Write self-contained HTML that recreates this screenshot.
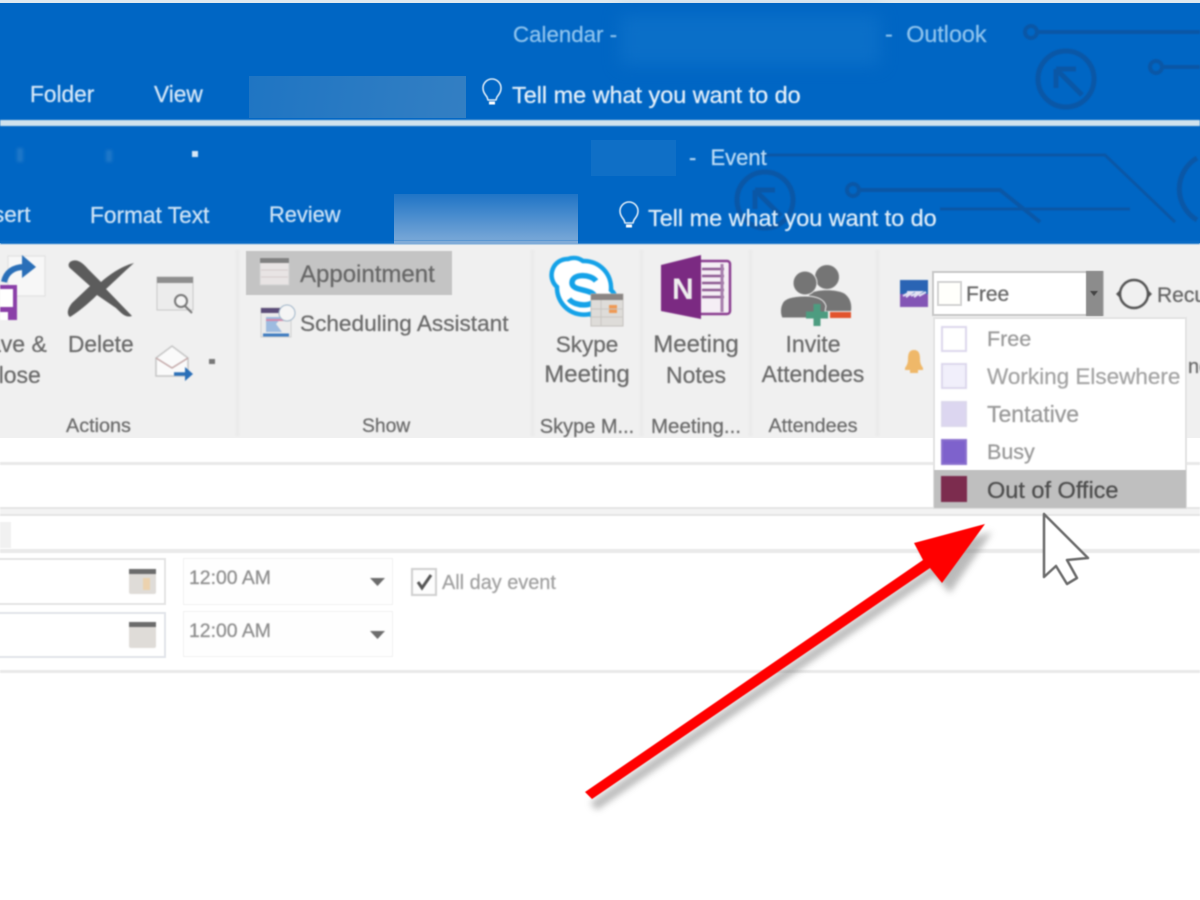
<!DOCTYPE html>
<html>
<head>
<meta charset="utf-8">
<style>
html,body{margin:0;padding:0;background:#fff}
#p{position:relative;width:1200px;height:900px;overflow:hidden;background:#fff;font-family:"Liberation Sans",sans-serif}
.a{position:absolute}
.t{position:absolute;white-space:nowrap;line-height:1;filter:blur(.8px);-webkit-text-stroke:.25px currentColor}
.w{color:#d6e8f8}
.g{color:#6a6a6a}
.c{transform:translateX(-50%)}
.s{position:absolute;width:26px;height:26px;box-sizing:border-box;border:2px solid #dcd8ec;left:941px;filter:blur(.7px)}
.line{position:absolute;left:0;width:1200px;background:#e9e9e9;filter:blur(.5px)}
.sep{position:absolute;top:250px;width:3px;height:186px;background:#e9e9e9;filter:blur(1px)}
</style>
</head>
<body>
<div id="p">
<div class="a" style="left:0;top:3px;width:1200px;height:240px;background:#0066c4"></div>
<div class="a" style="left:0;top:0;width:1200px;height:3px;background:#dfe9f0"></div>
<div class="a" style="left:0;top:120px;width:1200px;height:6px;background:#cfe2ee;filter:blur(.8px)"></div>
<div class="a" style="left:620px;top:15px;width:260px;height:50px;background:#0a6fc8;filter:blur(8px)"></div>
<div class="a" style="left:249px;top:76px;width:217px;height:42px;background:linear-gradient(100deg,#1f75c3,#337fc3)"></div>
<div class="a" style="left:591px;top:140px;width:85px;height:36px;background:#0f6fc6"></div>
<div class="a" style="left:394px;top:194px;width:184px;height:50px;background:linear-gradient(#1f74c6,#7fabd8)"></div>

<svg class="a" style="left:0;top:0;filter:blur(.9px)" width="1200" height="245" fill="none" stroke="#0a57a6" stroke-width="4">
<circle cx="1031" cy="32" r="6"/><path d="M1037 32H1200"/>
<circle cx="1156" cy="67" r="6"/><path d="M1162 67H1200"/>
<circle cx="1066" cy="79" r="28" stroke-width="5"/><path d="M1056 69V88M1056 69H1076M1056 69L1082 95" stroke-width="5"/>
<path d="M760 155H1105L1175 222" stroke-width="3"/>
<path d="M1197 158a36 36 0 0 0 0 62" stroke-width="5"/>
<circle cx="853" cy="190" r="6"/><path d="M859 190H1000L1040 222"/>
<path d="M940 209H1130" stroke-width="3"/>
<circle cx="765" cy="200" r="28" stroke-width="5"/><path d="M755 190V209M755 190H775M755 190L781 216" stroke-width="5"/>
</svg>

<div class="t" style="left:513px;top:24px;font-size:22.300px;color:#8fc4ee">Calendar -</div>
<div class="t" style="left:885px;top:23px;font-size:23.300px;color:#8fc4ee">- <span style="margin-left:7px">Outlook</span></div>
<div class="t w" style="left:30px;top:83px;font-size:22.700px">Folder</div>
<div class="t w" style="left:154px;top:83px;font-size:22.700px">View</div>
<div class="t" style="left:512px;top:84px;font-size:23.400px;color:#e6f1fa">Tell me what you want to do</div>
<svg class="a" style="left:481px;top:78px;filter:blur(.6px)" width="22" height="30" fill="none" stroke="#dcebf7" stroke-width="1.6"><path d="M6 19C3 15 2 13 2 10a9 9 0 0 1 18 0c0 3-1 5-4 9l-1 3H7z"/><path d="M8 25h6" stroke-width="3" stroke="#fff"/></svg>

<div class="a" style="left:192px;top:151px;width:6px;height:6px;background:#d8e8f6;filter:blur(.8px)"></div>
<div class="a" style="left:17px;top:148px;width:6px;height:14px;background:#1f78c8;filter:blur(1.5px)"></div>
<div class="a" style="left:106px;top:150px;width:6px;height:12px;background:#1f78c8;filter:blur(1.5px)"></div>
<div class="t" style="left:689px;top:147px;font-size:22px;color:#bcdcf5">- <span style="margin-left:8px">Event</span></div>
<div class="t" style="left:-7px;top:204px;font-size:22.500px;color:#cfe4f6">sert</div>
<div class="t" style="left:90px;top:204px;font-size:22.700px;color:#cfe4f6">Format Text</div>
<div class="t" style="left:269px;top:204px;font-size:21.800px;color:#cfe4f6">Review</div>
<div class="t" style="left:648px;top:207px;font-size:23.400px;color:#e0eef9">Tell me what you want to do</div>
<svg class="a" style="left:618px;top:201px;filter:blur(.6px)" width="22" height="30" fill="none" stroke="#dcebf7" stroke-width="1.6"><path d="M6 19C3 15 2 13 2 10a9 9 0 0 1 18 0c0 3-1 5-4 9l-1 3H7z"/><path d="M8 25h6" stroke-width="3" stroke="#fff"/></svg>

<div class="a" style="left:0;top:243px;width:1200px;height:195px;background:#f0f0f0"></div>
<div class="a" style="left:0;top:241px;width:1200px;height:3px;background:#0a6cc4;filter:blur(.7px)"></div>
<div class="a" style="left:394px;top:241px;width:184px;height:3px;background:#7fabd8"></div>
<div class="sep" style="left:236px"></div><div class="sep" style="left:531px"></div><div class="sep" style="left:640px"></div><div class="sep" style="left:749px"></div><div class="sep" style="left:876px"></div>

<svg class="a" style="left:0;top:250px;filter:blur(.8px)" width="60" height="75">
<rect x="8" y="6" width="37" height="40" fill="#f7f7f7" stroke="#dedede"/>
<path d="M4 32C6 22 14 17 24 17" fill="none" stroke="#2a6fb8" stroke-width="6"/><path d="M22 5L36 17L22 28z" fill="#2a6fb8"/>
<path d="M-3 35H17V70H-3z" fill="#8a3fa8"/><path d="M-3 39H13V57H-3z" fill="#fff"/><path d="M-3 62H8V70H-3z" fill="#fff"/>
</svg>
<svg class="a" style="left:64px;top:256px;filter:blur(.9px)" width="76" height="66"><path d="M6 6C12 2 18 6 24 13L37 26C46 18 58 10 70 7C62 14 52 24 42 33L68 60C62 62 58 58 52 52L33 39C24 48 14 56 6 61C2 58 4 52 8 47L26 30L7 13C4 11 4 8 6 6Z" fill="#5c5c5c"/></svg>
<svg class="a" style="left:154px;top:274px;filter:blur(.8px)" width="44" height="42"><rect x="3" y="3" width="36" height="33" fill="#ececec" stroke="#c8c8c8"/><rect x="3" y="3" width="36" height="6" fill="#8e8e8e"/><circle cx="27" cy="27" r="6" fill="#f4f4f4" stroke="#777" stroke-width="2"/><path d="M31 32L38 39" stroke="#777" stroke-width="2"/></svg>
<svg class="a" style="left:154px;top:344px;filter:blur(.8px)" width="44" height="40"><path d="M2 14L18 2L34 14V32H2z" fill="#fafafa" stroke="#c5c5c5" stroke-width="1.500"/><path d="M2 14L18 24L34 14" fill="none" stroke="#c4a9a9" stroke-width="1.500"/><path d="M20 30H34" stroke="#2a6fb8" stroke-width="3.500"/><path d="M31 23L39 30L31 37z" fill="#2a6fb8"/></svg>
<div class="a" style="left:209px;top:359px;width:6px;height:5px;background:#777;filter:blur(.8px)"></div>

<div class="t g" style="left:-12px;top:333px;font-size:23px">ave &amp;</div>
<div class="t g" style="left:-18px;top:364px;font-size:23px">Close</div>
<div class="t g" style="left:68px;top:333px;font-size:22.700px">Delete</div>
<div class="t g" style="left:66px;top:417px;font-size:19.800px">Actions</div>
<div class="t g" style="left:362px;top:417px;font-size:19.300px">Show</div>

<div class="a" style="left:246px;top:251px;width:206px;height:44px;background:#c4c4c4;filter:blur(.5px)"></div>
<svg class="a" style="left:258px;top:256px;filter:blur(.8px)" width="34" height="32"><rect x="2" y="2" width="29" height="27" fill="#e8e4e4" stroke="#d0d0d0"/><rect x="2" y="2" width="29" height="5" fill="#808080"/><path d="M3 14H30M3 21H30" stroke="#d4cccc"/></svg>
<div class="t" style="left:300px;top:263px;font-size:24px;color:#666">Appointment</div>
<svg class="a" style="left:258px;top:302px;filter:blur(.8px)" width="40" height="38"><rect x="3" y="6" width="30" height="29" fill="#ececec" stroke="#cfcfcf"/><rect x="3" y="6" width="22" height="5" fill="#5b4c78"/><path d="M8 15H24L18 22L24 30H8" fill="#9dbbe0"/><path d="M5 33H31" stroke="#3f7cc0" stroke-width="3"/><path d="M8 18H28" stroke="#d487a8" stroke-width="2"/><circle cx="29" cy="11" r="8" fill="#f5f5f5" stroke="#9fb4c8"/></svg>
<div class="t g" style="left:300px;top:313px;font-size:22.600px">Scheduling Assistant</div>

<svg class="a" style="left:549px;top:254px;filter:blur(.8px)" width="80" height="76" fill="none">
<path d="M19 5a16 16 0 0 1 15 2a27 27 0 0 1 28 29a15 15 0 0 1-21 24a27 27 0 0 1-33-27a16 16 0 0 1 11-28z" fill="#fff" stroke="#15a2e8" stroke-width="4.500"/>
<path d="M47 27C42 20 23 19 23 29C23 38 46 34 46 44C46 53 26 53 20 45" stroke="#15a2e8" stroke-width="5.500"/>
<rect x="42" y="40" width="32" height="32" fill="#dedcd9" stroke="#c3c0bc"/><rect x="42" y="40" width="32" height="6" fill="#8a8583"/><rect x="60" y="51" width="8" height="8" fill="#ef9a55"/><path d="M42 55H74M42 63H74M52 46V72" stroke="#c9c6c2"/>
</svg>
<svg class="a" style="left:658px;top:252px;filter:blur(.8px)" width="76" height="72">
<rect x="38" y="9" width="34" height="53" rx="3" fill="#f5eef5" stroke="#8a3d8f" stroke-width="2.500"/>
<path d="M44 17H66M44 24H66M44 31H66M44 38H66M44 45H66" stroke="#8d5a92" stroke-width="2.500"/>
<path d="M64 12V60" stroke="#a67dac" stroke-width="3"/>
<path d="M3 13L43 3V67L3 59Z" fill="#7b2a82"/>
<text x="14" y="47" font-family="Liberation Sans" font-weight="700" font-size="30" fill="#eee">N</text>
</svg>
<svg class="a" style="left:776px;top:258px;filter:blur(.9px)" width="80" height="72">
<circle cx="51" cy="19" r="12" fill="#757575"/><path d="M33 36C40 31 62 31 69 36C74 40 76 46 75 53H33Z" fill="#757575"/>
<circle cx="29" cy="25" r="12" fill="#757575" stroke="#f0f0f0" stroke-width="1"/><path d="M6 46C8 40 18 38 29 38C40 38 48 41 50 48L48 60H6C4 56 4 50 6 46Z" fill="#757575" stroke="#f0f0f0" stroke-width="1"/>
<path d="M30 57H52M41 46V68" stroke="#4d9c80" stroke-width="7"/><path d="M54 57H75" stroke="#e2532d" stroke-width="6"/>
</svg>

<div class="t g c" style="left:587px;top:334px;font-size:22.500px">Skype</div>
<div class="t g c" style="left:587px;top:363px;font-size:24px">Meeting</div>
<div class="t g c" style="left:696px;top:333px;font-size:24px">Meeting</div>
<div class="t g c" style="left:696px;top:364px;font-size:23px">Notes</div>
<div class="t g c" style="left:813px;top:333px;font-size:23px">Invite</div>
<div class="t g c" style="left:813px;top:363px;font-size:22.800px">Attendees</div>
<div class="t g c" style="left:587px;top:417px;font-size:20px">Skype M...</div>
<div class="t g c" style="left:696px;top:417px;font-size:20.500px">Meeting...</div>
<div class="t g c" style="left:813px;top:417px;font-size:19.800px">Attendees</div>

<svg class="a" style="left:899px;top:279px;filter:blur(.7px)" width="30" height="30"><rect x="1" y="1" width="28" height="14" fill="#2a64b4"/><rect x="1" y="15" width="28" height="13" fill="#8355b5"/><path d="M4 17L11 13H8L14 13L7 18M12 17L19 13H16L22 13L15 18M20 17L27 13" stroke="#e4e4f4" stroke-width="2" fill="none"/></svg>
<div class="a" style="left:932px;top:271px;width:172px;height:45px;box-sizing:border-box;background:#fff;border:2px solid #c8c8c8;filter:blur(.6px)"></div>
<div class="a" style="left:1086px;top:271px;width:17px;height:45px;background:#8c8c8c;filter:blur(.6px)"></div>
<svg class="a" style="left:1089px;top:290px;filter:blur(.6px)" width="10" height="8"><path d="M1 1H9L5 6Z" fill="#444"/></svg>
<div class="a" style="left:937px;top:281px;width:25px;height:25px;box-sizing:border-box;border:2px solid #d4d4d4;background:#fffffb;filter:blur(.6px)"></div>
<div class="t" style="left:966px;top:284px;font-size:21px;color:#666">Free</div>
<svg class="a" style="left:1115px;top:275px;filter:blur(.8px)" width="38" height="38" fill="none" stroke="#555" stroke-width="2.500"><circle cx="19" cy="19" r="14"/><path d="M1 19L6 14V24Z" fill="#555" stroke="none"/><path d="M37 19L32 14V24Z" fill="#555" stroke="none"/></svg>
<div class="t" style="left:1157px;top:285px;font-size:21px;color:#666">Recu</div>
<svg class="a" style="left:902px;top:348px;filter:blur(.9px)" width="24" height="28"><path d="M12 2C7 2 6 6 6 11C6 15 5 17 3 20V22H21V20C19 17 18 15 18 11C18 6 17 2 12 2Z" fill="#efb869"/><rect x="8" y="22" width="8" height="3" fill="#efb869"/></svg>
<div class="t g" style="left:1188px;top:357px;font-size:20px">ne</div>

<div class="a" style="left:0;top:438px;width:1200px;height:462px;background:#fff"></div>
<div class="line" style="top:462px;height:3px"></div>
<div class="line" style="top:507px;height:9px;background:#f3f3f3;border-top:2px solid #e6e6e6;border-bottom:2px solid #e6e6e6;box-sizing:border-box"></div>
<div class="a" style="left:0;top:522px;width:11px;height:26px;background:#f1f1f1;filter:blur(.5px)"></div>
<div class="line" style="top:549px;height:4px;background:#eaeaea"></div>
<div class="line" style="top:670px;height:3px"></div>

<div class="a" style="left:-4px;top:558px;width:170px;height:47px;box-sizing:border-box;border:2px solid #e4e4e4;background:#fff;filter:blur(.5px)"></div>
<div class="a" style="left:-4px;top:612px;width:170px;height:46px;box-sizing:border-box;border:2px solid #e2e5ea;background:#fff;filter:blur(.5px)"></div>
<svg class="a" style="left:128px;top:568px;filter:blur(.7px)" width="30" height="28"><rect x="1" y="1" width="27" height="25" rx="2" fill="#dfdcd8"/><rect x="1" y="1" width="27" height="5" fill="#6b6b6b"/><rect x="15" y="10" width="7" height="12" fill="#ecd2ae"/></svg>
<svg class="a" style="left:128px;top:621px;filter:blur(.7px)" width="30" height="28"><rect x="1" y="1" width="27" height="26" rx="2" fill="#dfdcd8"/><rect x="1" y="1" width="27" height="5" fill="#6b6b6b"/></svg>
<div class="a" style="left:183px;top:558px;width:210px;height:47px;box-sizing:border-box;border:1px solid #f2f2f2;background:#fefefe;filter:blur(.5px)"></div>
<div class="a" style="left:183px;top:611px;width:210px;height:46px;box-sizing:border-box;border:1px solid #f2f2f2;background:#fefefe;filter:blur(.5px)"></div>
<div class="t" style="left:189px;top:569px;font-size:19.400px;color:#8d8d8d">12:00 AM</div>
<div class="t" style="left:189px;top:622px;font-size:19.400px;color:#8d8d8d">12:00 AM</div>
<svg class="a" style="left:368px;top:576px;filter:blur(.7px)" width="20" height="66"><path d="M2 2H17L9.500 10Z" fill="#6c6c6c"/><path d="M2 55H17L9.500 63Z" fill="#6c6c6c"/></svg>
<svg class="a" style="left:410px;top:567px;filter:blur(.7px)" width="30" height="30"><rect x="2" y="2" width="24" height="26" fill="#fdfdfd" stroke="#cfcfcf" stroke-width="2"/><path d="M8 15L12 21L21 8" fill="none" stroke="#555" stroke-width="3"/></svg>
<div class="t" style="left:442px;top:574px;font-size:19.900px;color:#a0a0a0">All day event</div>

<div class="a" style="left:933px;top:317px;width:254px;height:192px;box-sizing:border-box;background:#fff;border:2px solid #e3e3e3;filter:blur(.5px)"></div>
<div class="a" style="left:934px;top:470px;width:252px;height:38px;background:#bfbfbf;filter:blur(.5px)"></div>
<div class="s" style="top:326px;background:#fff"></div>
<div class="s" style="top:363px;background:#f1effb"></div>
<div class="s" style="top:401px;background:#dcd6f0"></div>
<div class="s" style="top:439px;background:#7e62cc;border-color:#8b72cf"></div>
<div class="s" style="top:476px;background:#7c2c4e;border-color:#7c2c4e"></div>
<div class="t" style="left:987px;top:329px;font-size:21.500px;color:#999">Free</div>
<div class="t" style="left:987px;top:366px;font-size:22.500px;color:#a3a3a3">Working Elsewhere</div>
<div class="t" style="left:987px;top:403px;font-size:23px;color:#999">Tentative</div>
<div class="t" style="left:987px;top:442px;font-size:21.500px;color:#999">Busy</div>
<div class="t" style="left:987px;top:479px;font-size:23.500px;color:#4c4c4c">Out of Office</div>

<svg class="a" style="left:0;top:0;filter:blur(.5px)" width="1200" height="900">
<defs><filter id="sh" x="-20%" y="-20%" width="140%" height="140%"><feGaussianBlur stdDeviation="3.500"/></filter></defs>
<path d="M590 803L597 810L935 576L950 593L992 532L921 551L930 568Z" fill="#777" opacity=".5" filter="url(#sh)"/>
<path d="M585 792L592 799L930 568L942 583L985 524L914 543L923 560Z" fill="#ff0000"/>
<path d="M1044 514V577L1056 566L1067 584L1077 578L1067 560L1088 558Z" fill="#fff" stroke="#6a6a6a" stroke-width="2.500" stroke-linejoin="round"/>
</svg>
</div>
</body>
</html>
